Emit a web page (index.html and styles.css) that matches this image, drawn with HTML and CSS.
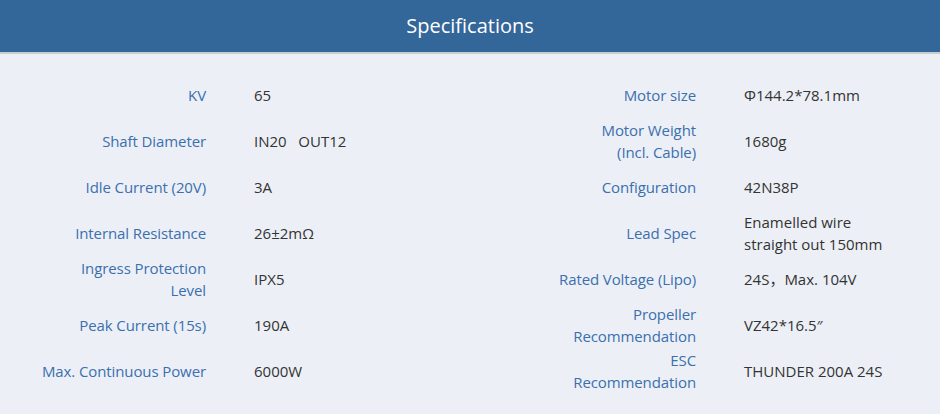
FILE: index.html
```html
<!DOCTYPE html>
<html lang="en">
<head>
<meta charset="utf-8">
<title>Specifications</title>
<link rel="stylesheet" href="styles.css">
</head>
<body>
<div class="header">Specifications</div>
<div class="specs">
  <div class="col col-left">
    <div class="row"><div class="label">KV</div><div class="value">65</div></div>
    <div class="row"><div class="label">Shaft Diameter</div><div class="value">IN20&nbsp;&nbsp;&nbsp;OUT12</div></div>
    <div class="row"><div class="label">Idle Current (20V)</div><div class="value">3A</div></div>
    <div class="row"><div class="label">Internal Resistance</div><div class="value">26±2mΩ</div></div>
    <div class="row"><div class="label">Ingress Protection<br>Level</div><div class="value">IPX5</div></div>
    <div class="row"><div class="label">Peak Current (15s)</div><div class="value">190A</div></div>
    <div class="row"><div class="label">Max. Continuous Power</div><div class="value">6000W</div></div>
  </div>
  <div class="col col-right">
    <div class="row"><div class="label">Motor size</div><div class="value">Φ144.2*78.1mm</div></div>
    <div class="row"><div class="label">Motor Weight<br>(Incl. Cable)</div><div class="value">1680g</div></div>
    <div class="row"><div class="label">Configuration</div><div class="value">42N38P</div></div>
    <div class="row"><div class="label">Lead Spec</div><div class="value">Enamelled wire<br>straight out 150mm</div></div>
    <div class="row"><div class="label">Rated Voltage (Lipo)</div><div class="value">24S，Max. 104V</div></div>
    <div class="row"><div class="label">Propeller<br>Recommendation</div><div class="value">VZ42*16.5″</div></div>
    <div class="row"><div class="label">ESC<br>Recommendation</div><div class="value">THUNDER 200A 24S</div></div>
  </div>
</div>
</body>
</html>
```
FILE: styles.css
```css
html, body {
  margin: 0;
  padding: 0;
}
body {
  background: #ecf0f6;
  font-family: "Open Sans", "Noto Sans CJK SC", sans-serif;
  font-size: 15px;
  width: 940px;
  height: 414px;
  overflow: hidden;
}
.header {
  height: 52px;
  line-height: 52px;
  background: #336699;
  color: #ffffff;
  text-align: center;
  font-size: 20px;
  border-bottom: 2px solid #c9cdd2;
}
.specs {
  display: flex;
  padding-top: 18px;
}
.col {
  display: flex;
  flex-direction: column;
}
.col-left {
  width: 490px;
}
.col-right {
  width: 450px;
}
.row {
  display: flex;
  align-items: center;
  height: 46px;
}
.label {
  width: 206px;
  text-align: right;
  color: #3b6fae;
  line-height: 22px;
  flex-shrink: 0;
  letter-spacing: -0.1px;
}
.value {
  margin-left: 48px;
  color: #333333;
  line-height: 22px;
}
```
